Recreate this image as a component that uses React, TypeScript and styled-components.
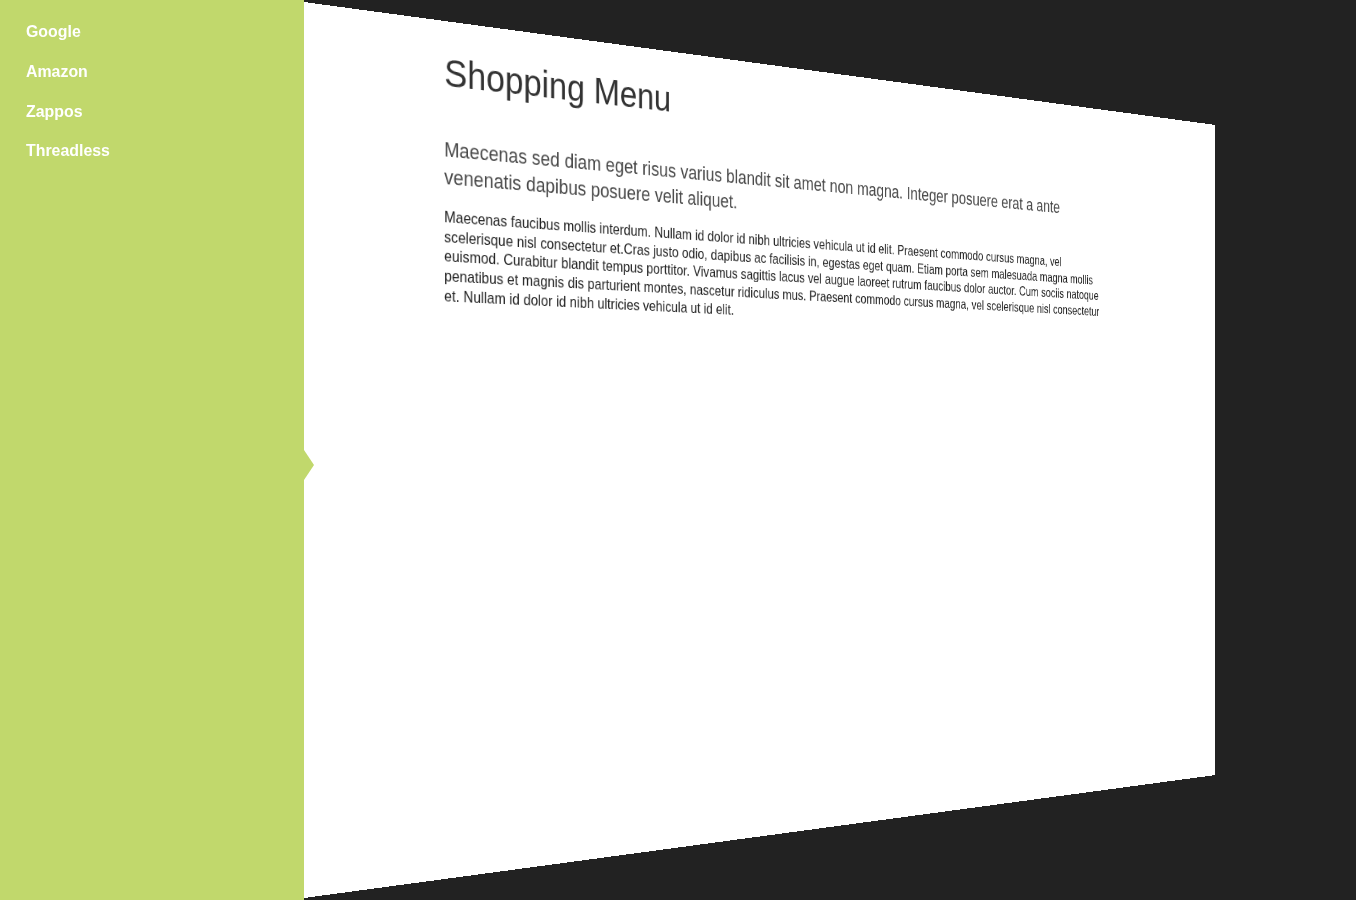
import React from "react";
import styled, { createGlobalStyle } from "styled-components";

const Global = createGlobalStyle`
  html, body { margin: 0; padding: 0; background: #222222; }
  body { font-family: "Liberation Sans", Arial, sans-serif; overflow: hidden; }
`;

const Stage = styled.div`
  display: flex;
  width: 1356px;
  height: 900px;
  overflow: hidden;
  background: #222222;
  perspective: 1936px;
  perspective-origin: 678px 450px;
`;

const Sidebar = styled.nav`
  position: relative;
  z-index: 2;
  flex: 0 0 304px;
  box-sizing: border-box;
  height: 900px;
  padding: 12px 26px;
  background: #c1d86c;
  &::after {
    content: "";
    position: absolute;
    left: 100%;
    top: 450px;
    border-left: 10px solid #c1d86c;
    border-top: 15px solid transparent;
    border-bottom: 15px solid transparent;
  }
`;

const NavLink = styled.a`
  display: block;
  height: 39.8px;
  line-height: 40px;
  font-size: 15.9px;
  font-weight: 700;
  color: #ffffff;
  text-decoration: none;
`;

const Page = styled.main`
  flex: 0 0 1354px;
  box-sizing: border-box;
  height: 900px;
  margin-left: -15px;
  padding: 24px 222px 0 172px;
  background: #ffffff;
  transform-origin: 0 50%;
  transform: rotateY(33.3deg);
`;

const Title = styled.h1`
  margin: 0 0 37px;
  font-size: 40.5px;
  line-height: 60px;
  font-weight: 400;
  color: #333333;
`;

const Lead = styled.p`
  margin: 0 0 15px;
  font-size: 21.45px;
  line-height: 29.4px;
  color: #484848;
`;

const Body = styled.p`
  margin: 0;
  font-size: 16.2px;
  line-height: 20.7px;
  color: #222222;
`;

const links = ["Google", "Amazon", "Zappos", "Threadless"];

export default function App() {
  return (
    <Stage>
      <Global />
      <Sidebar>
        {links.map((l) => (
          <NavLink href="#" key={l}>{l}</NavLink>
        ))}
      </Sidebar>
      <Page>
        <Title>Shopping Menu</Title>
        <Lead>Maecenas sed diam eget risus varius blandit sit amet non magna. Integer posuere erat a ante venenatis dapibus posuere velit aliquet.</Lead>
        <Body>Maecenas faucibus mollis interdum. Nullam id dolor id nibh ultricies vehicula ut id elit. Praesent commodo cursus magna, vel scelerisque nisl consectetur et.Cras justo odio, dapibus ac facilisis in, egestas eget quam. Etiam porta sem malesuada magna mollis euismod. Curabitur blandit tempus porttitor. Vivamus sagittis lacus vel augue laoreet rutrum faucibus dolor auctor. Cum sociis natoque penatibus et magnis dis parturient montes, nascetur ridiculus mus. Praesent commodo cursus magna, vel scelerisque nisl consectetur et. Nullam id dolor id nibh ultricies vehicula ut id elit.</Body>
      </Page>
    </Stage>
  );
}
